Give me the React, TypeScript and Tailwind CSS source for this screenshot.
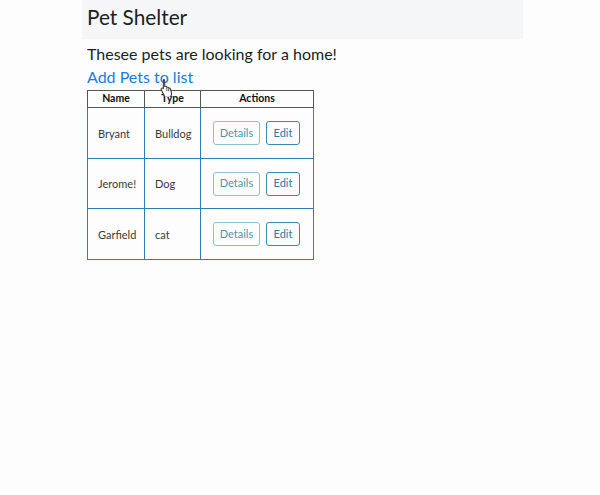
import React from 'react';

const pets = [
  { name: 'Bryant', type: 'Bulldog', row: 'h-[51px]' },
  { name: 'Jerome!', type: 'Dog', row: 'h-[50px]' },
  { name: 'Garfield', type: 'cat', row: 'h-[51px]' },
];

// pointer cursor hovering the link in the capture
const HandCursor = () => (
  <svg width="15" height="19" viewBox="0 0 14 18" className="absolute left-[159px] top-[78px]">
    <path
      d="M4 1.5c.8 0 1.3.6 1.3 1.3v5.2l.3-.1c.7-.3 1.5 0 1.7.7l.1.2c.7-.3 1.5 0 1.7.7.7-.2 1.4.2 1.6.9l.9 3.3c.3 1.3.1 2.7-.6 3.8l-.5.8H5.6L2.2 11.4c-.4-.6-.3-1.4.3-1.8.5-.3 1.1-.2 1.5.2V2.8c0-.7.5-1.3 1.3-1.3z"
      fill="#fff"
      stroke="#333"
      strokeWidth="1"
    />
    <path d="M7.3 9.5v3M9.1 10v2.6" stroke="#333" strokeWidth="0.8" />
  </svg>
);

export default function App() {
  return (
    <div
      className="relative min-h-[495px] w-[600px] bg-[#fdfdfe] text-[#1c1f23]"
      style={{ fontFamily: 'Lato, "Noto Sans", sans-serif' }}
    >
      <div className="ml-[82px] h-[39px] w-[441px] bg-[#f5f6f8] pl-[5px]">
        <h1 className="text-[20.8px] leading-[34px] font-normal">Pet Shelter</h1>
      </div>
      <div className="px-[87px]">
        <h2 className="mt-[3px] text-[16px] leading-[23px] font-normal">Thesee pets are looking for a home!</h2>
        <a className="block text-[16px] leading-[23px] text-[#1a7ce0]">Add Pets to list</a>
        <table className="mt-[2px] border-collapse text-[11px] text-[#3a3a3a]">
          <thead>
            <tr className="h-[17px]">
              <th className="w-[57px] border border-[#555] text-[10.5px] font-bold text-[#111]">Name</th>
              <th className="w-[56px] border border-[#555] text-[10.5px] font-bold text-[#111]">Type</th>
              <th className="w-[113px] border border-[#555] text-[10.5px] font-bold text-[#111]">Actions</th>
            </tr>
          </thead>
          <tbody>
            {pets.map((p) => (
              <tr key={p.name} className={p.row}>
                <td className="border border-[#2f7fb0] pt-[2px] pl-[10px]">{p.name}</td>
                <td className="border border-[#2f7fb0] pt-[2px] pl-[10px]">{p.type}</td>
                <td className="border border-[#2f7fb0] pl-[12px]">
                  <div className="flex gap-[6px]">
                    <button className="h-[24px] w-[47px] rounded-[3px] border border-[#8fc0d2] text-[11px] text-[#4b97b0]">
                      Details
                    </button>
                    <button className="h-[24px] w-[34px] rounded-[3px] border border-[#3d88ae] text-[11px] text-[#2f7aa5]">
                      Edit
                    </button>
                  </div>
                </td>
              </tr>
            ))}
          </tbody>
        </table>
      </div>
      <HandCursor />
    </div>
  );
}
